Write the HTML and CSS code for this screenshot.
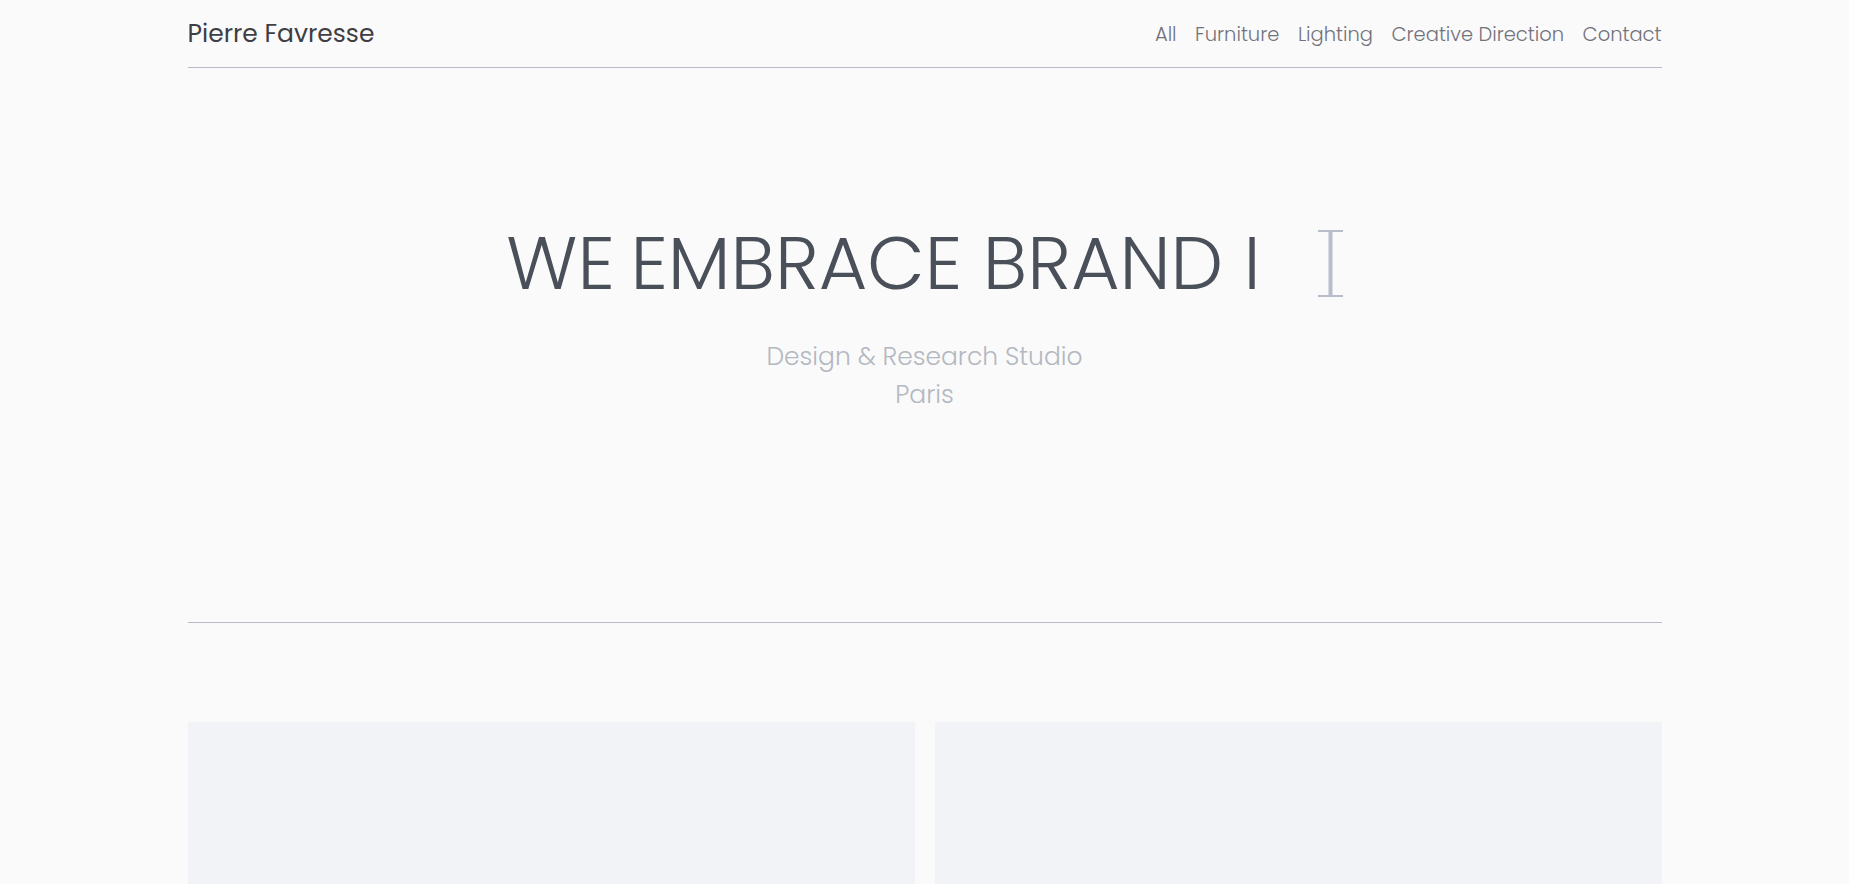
FILE: index.html
```html
<!DOCTYPE html>
<html lang="en">
<head>
<meta charset="utf-8">
<title>Pierre Favresse</title>
<link rel="stylesheet" href="styles.css">
</head>
<body>
<div class="page">
  <header class="site-header">
    <a class="logo" href="#">Pierre Favresse</a>
    <nav class="nav">
      <a href="#">All</a>
      <a href="#">Furniture</a>
      <a href="#">Lighting</a>
      <a href="#">Creative Direction</a>
      <a href="#">Contact</a>
    </nav>
  </header>

  <section class="hero">
    <h1 class="hero-title">
      <span class="typed"><span class="word-tight">WE</span> EMBRACE BRAND I</span>
      <svg class="caret" width="25" height="67" viewBox="0 0 25 67" aria-hidden="true">
        <rect x="0" y="0" width="25" height="2" fill="#b8bec9"/>
        <rect x="10.5" y="0" width="4" height="67" fill="#b8bec9"/>
        <rect x="0" y="65" width="25" height="2" fill="#b8bec9"/>
      </svg>
    </h1>
    <p class="hero-sub">Design &amp; Research Studio<br>Paris</p>
  </section>

  <section class="grid">
    <div class="card"></div>
    <div class="card"></div>
  </section>
</div>
</body>
</html>
```

FILE: styles.css
```css
* { box-sizing: border-box; }

html, body {
  margin: 0;
  padding: 0;
  background: #fafafa;
}

body {
  font-family: "Poppins", Inter, "Noto Sans", sans-serif;
  color: #404046;
}

.page {
  max-width: 1474px;
  margin: 0 auto;
}

.site-header {
  height: 68px;
  display: flex;
  align-items: center;
  justify-content: space-between;
  border-bottom: 1px solid #b9bac9;
}

.logo {
  font-size: 25px;
  font-weight: 400;
  color: #3e3e44;
  text-decoration: none;
}

.nav {
  display: flex;
  gap: 18.5px;
  padding-top: 2px;
}

.nav a {
  font-size: 19.5px;
  font-weight: 300;
  color: #72727c;
  text-decoration: none;
}

.hero {
  padding: 158px 0 207px;
  border-bottom: 1px solid #b9bac9;
  text-align: center;
}

.hero-title {
  margin: 0;
  display: flex;
  justify-content: center;
  align-items: center;
  gap: 57px;
  font-size: 74.5px;
  font-weight: 300;
  line-height: 74px;
  color: #4a5059;
}

.word-tight {
  margin-right: -5px;
}

.caret {
  display: block;
  flex: none;
}

.hero-sub {
  margin: 38px 0 0;
  font-size: 25px;
  font-weight: 300;
  line-height: 38.3px;
  color: #b3b8c1;
}

.grid {
  display: grid;
  grid-template-columns: 1fr 1fr;
  gap: 20px;
  padding-top: 99px;
}

.card {
  height: 520px;
  background: #f2f3f7;
}
```
